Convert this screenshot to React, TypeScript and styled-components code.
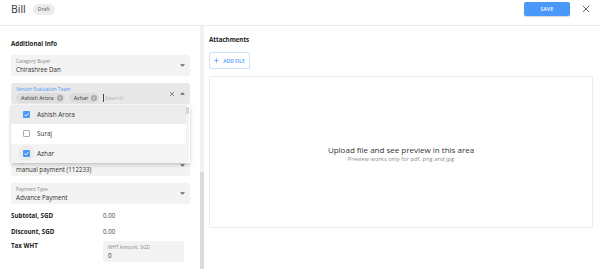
import styled, { createGlobalStyle } from 'styled-components';

const GlobalStyle = createGlobalStyle`
  html, body {
    margin: 0;
    padding: 0;
    background: #fff;
  }
  body {
    font-family: "Open Sans", "Noto Sans", sans-serif;
    color: #2b2b2b;
    width: 600px;
    height: 269px;
    overflow: hidden;
  }
`;

const Page = styled.div`
  width: 600px;
  height: 269px;
  display: flex;
  flex-direction: column;
`;

const Header = styled.header`
  flex-shrink: 0;
  height: 26px;
  box-sizing: border-box;
  border-bottom: 1px solid #ebebeb;
  padding: 2px 7px 0 11px;
  display: flex;
  align-items: flex-start;
  gap: 7px;
`;

const Title = styled.div`
  font-size: 10.5px;
  line-height: 14px;
  color: #333;
`;

const Chip = styled.span`
  margin-top: 2px;
  height: 11px;
  padding: 0 5px;
  border-radius: 6px;
  background: #ececec;
  font-size: 5px;
  line-height: 11px;
  color: #555;
`;

const Spacer = styled.div`
  flex: 1;
`;

const SaveButton = styled.button`
  width: 46px;
  height: 14px;
  border: none;
  border-radius: 2px;
  background: #4a98f7;
  color: #fff;
  font-family: inherit;
  font-size: 5px;
  font-weight: 600;
  letter-spacing: 0.2px;
  padding: 0;
  box-shadow: 0 1px 1px rgba(0, 0, 0, 0.15);
`;

const CloseButton = styled.button`
  width: 14px;
  height: 14px;
  margin-left: 2px;
  border: none;
  background: none;
  padding: 0;
  display: flex;
  align-items: center;
  justify-content: center;
`;

const Body = styled.div`
  flex: 1;
  display: flex;
  min-height: 0;
  overflow: hidden;
`;

const LeftPanel = styled.div`
  width: 200px;
  box-sizing: border-box;
  padding: 13px 10px 0 11px;
  position: relative;
`;

const ScrollTrack = styled.div`
  width: 4px;
  background: #f2f2f2;
  display: flex;
  flex-direction: column;
`;

const ScrollThumb = styled.div`
  margin-top: auto;
  height: 97px;
  background: #dadada;
`;

const SectionTitle = styled.div`
  font-size: 6.2px;
  line-height: 10px;
  font-weight: 700;
  color: #222;
`;

const Fields = styled.div`
  margin-top: 6px;
  display: flex;
  flex-direction: column;
  gap: 7px;
`;

const Field = styled.div<{ $active?: boolean; $tall?: boolean; $width?: number }>`
  position: relative;
  box-sizing: border-box;
  height: ${(p) => (p.$tall ? 37 : 21)}px;
  width: ${(p) => (p.$width ? `${p.$width}px` : 'auto')};
  padding: 3px 18px 0 5px;
  border-radius: 3px;
  background: ${(p) => (p.$active ? '#e8e8e8' : '#f3f3f3')};
  display: flex;
  flex-direction: column;
`;

const FieldLabel = styled.div<{ $active?: boolean }>`
  font-size: 4.8px;
  line-height: 7px;
  color: ${(p) => (p.$active ? '#4a98f7' : '#8a8a8a')};
`;

const FieldValue = styled.div`
  font-size: 6.2px;
  line-height: 9px;
  color: #2f2f2f;
  white-space: nowrap;
`;

const FieldIcons = styled.div`
  position: absolute;
  right: 5px;
  top: 0;
  bottom: 0;
  display: flex;
  align-items: center;
  gap: 5px;
`;

const ChipRow = styled.div`
  display: flex;
  align-items: center;
  gap: 4px;
`;

const TagChip = styled.span`
  height: 10px;
  padding: 0 2px 0 5px;
  border-radius: 5px;
  background: #dcdcdc;
  display: inline-flex;
  align-items: center;
  gap: 3px;
  font-size: 5.5px;
  color: #333;
`;

const SearchInput = styled.span`
  display: inline-flex;
  align-items: center;
  font-size: 5.8px;
  color: #b3b3b3;
  border-left: 1px solid #444;
  padding-left: 1px;
  height: 8px;
`;

const Menu = styled.div`
  position: absolute;
  left: 11px;
  top: 79px;
  width: 179px;
  height: 58px;
  background: #fff;
  box-shadow: 0 2px 4px rgba(0, 0, 0, 0.18), 0 0 1px rgba(0, 0, 0, 0.12);
  display: flex;
  z-index: 2;
`;

const MenuList = styled.div`
  flex: 1;
  display: flex;
  flex-direction: column;
`;

const MenuItem = styled.div<{ $bg: string }>`
  height: 19.3px;
  display: flex;
  align-items: center;
  padding-left: 11px;
  gap: 7px;
  background: ${(p) => p.$bg};
  font-size: 6.4px;
  color: #333;
`;

const CheckWrap = styled.span<{ $ripple?: boolean }>`
  width: 16px;
  height: 16px;
  margin-left: -4px;
  margin-right: -4px;
  border-radius: 50%;
  background: ${(p) => (p.$ripple ? '#ececec' : 'transparent')};
  display: flex;
  align-items: center;
  justify-content: center;
`;

const MenuScroll = styled.div`
  width: 3px;
  margin: 2px 1px 1px 0;
  background: #f4f4f4;
  display: flex;
  flex-direction: column;
`;

const MenuThumb = styled.div`
  height: 7px;
  background: #d6d6d6;
`;

const Totals = styled.div`
  margin-top: 3px;
  display: grid;
  grid-template-columns: 92px 1fr;
  grid-auto-rows: 16px;
  align-items: center;
`;

const TotalLabel = styled.div`
  font-size: 6.2px;
  font-weight: 700;
  color: #222;
`;

const TotalValue = styled.div`
  font-size: 6.2px;
  color: #444;
`;

const TaxRow = styled.div`
  display: grid;
  grid-template-columns: 92px 1fr;
  align-items: start;
  margin-top: 2px;
`;

const TaxLabel = styled(TotalLabel)`
  line-height: 10px;
`;

const RightPanel = styled.div`
  flex: 1;
  padding: 9px 7px 0 5px;
  display: flex;
  flex-direction: column;
`;

const AddFileButton = styled.button`
  margin-top: 7px;
  align-self: flex-start;
  width: 41px;
  height: 17px;
  box-sizing: border-box;
  border: 1px solid #cfe1fb;
  border-radius: 2px;
  background: #fff;
  color: #4a98f7;
  font-family: inherit;
  font-size: 5px;
  font-weight: 600;
  display: flex;
  align-items: center;
  justify-content: center;
  gap: 4px;
  padding: 0;
`;

const PreviewBox = styled.div`
  margin-top: 7px;
  height: 152px;
  box-sizing: border-box;
  border: 1px solid #ececec;
  border-radius: 1px;
  display: flex;
  flex-direction: column;
  align-items: center;
  justify-content: center;
  padding-top: 3px;
`;

const PreviewTitle = styled.div`
  font-size: 8px;
  line-height: 11px;
  color: #333;
`;

const PreviewSub = styled.div`
  font-size: 5.8px;
  line-height: 9px;
  color: #8c8c8c;
`;

const Caret = ({ up }: { up?: boolean }) => (
  <svg width="5" height="3" viewBox="0 0 10 5">
    <path d={up ? 'M0 5 L5 0 L10 5 Z' : 'M0 0 L5 5 L10 0 Z'} fill="#666" />
  </svg>
);

const ClearX = () => (
  <svg width="6" height="6" viewBox="0 0 10 10">
    <path d="M1.5 1.5 L8.5 8.5 M8.5 1.5 L1.5 8.5" stroke="#666" strokeWidth="1.3" />
  </svg>
);

const ChipClose = () => (
  <svg width="6" height="6" viewBox="0 0 12 12">
    <circle cx="6" cy="6" r="6" fill="#a9a9a9" />
    <path d="M3.8 3.8 L8.2 8.2 M8.2 3.8 L3.8 8.2" stroke="#dcdcdc" strokeWidth="1.4" />
  </svg>
);

const Checkbox = ({ checked }: { checked: boolean }) =>
  checked ? (
    <svg width="7" height="7" viewBox="0 0 14 14">
      <rect x="0" y="0" width="14" height="14" rx="2" fill="#4a98f7" />
      <path d="M3 7.2 L5.8 10 L11 4.3" stroke="#fff" strokeWidth="1.8" fill="none" />
    </svg>
  ) : (
    <svg width="7" height="7" viewBox="0 0 14 14">
      <rect x="0.8" y="0.8" width="12.4" height="12.4" rx="2" fill="#fff" stroke="#777" strokeWidth="1.4" />
    </svg>
  );

const menuItems = [
  { name: 'Ashish Arora', checked: true, bg: '#ececec' },
  { name: 'Suraj', checked: false, bg: '#ffffff' },
  { name: 'Azhar', checked: true, bg: '#f4f4f4', ripple: true },
];

const App = () => {
  return (
    <Page>
      <GlobalStyle />
      <Header>
        <Title>Bill</Title>
        <Chip>Draft</Chip>
        <Spacer />
        <SaveButton>SAVE</SaveButton>
        <CloseButton>
          <svg width="8" height="8" viewBox="0 0 10 10">
            <path d="M1 1 L9 9 M9 1 L1 9" stroke="#555" strokeWidth="1.1" />
          </svg>
        </CloseButton>
      </Header>
      <Body>
        <LeftPanel>
          <SectionTitle>Additional Info</SectionTitle>
          <Fields>
            <Field>
              <FieldLabel>Category Buyer</FieldLabel>
              <FieldValue>Chirashree Dan</FieldValue>
              <FieldIcons>
                <Caret />
              </FieldIcons>
            </Field>
            <Field $active>
              <FieldLabel $active>Vendor Evaluation Team</FieldLabel>
              <ChipRow>
                <TagChip>
                  Ashish Arora <ChipClose />
                </TagChip>
                <TagChip>
                  Azhar <ChipClose />
                </TagChip>
                <SearchInput>Search</SearchInput>
              </ChipRow>
              <FieldIcons>
                <ClearX />
                <Caret up />
              </FieldIcons>
            </Field>
            <Field $tall>
              <FieldLabel>Vendor</FieldLabel>
              <FieldValue>—</FieldValue>
            </Field>
            <Field>
              <FieldLabel>Payment Method</FieldLabel>
              <FieldValue>manual payment (112233)</FieldValue>
              <FieldIcons>
                <Caret />
              </FieldIcons>
            </Field>
            <Field>
              <FieldLabel>Payment Type</FieldLabel>
              <FieldValue>Advance Payment</FieldValue>
              <FieldIcons>
                <Caret />
              </FieldIcons>
            </Field>
          </Fields>
          <Totals>
            <TotalLabel>Subtotal, SGD</TotalLabel>
            <TotalValue>0.00</TotalValue>
            <TotalLabel>Discount, SGD</TotalLabel>
            <TotalValue>0.00</TotalValue>
          </Totals>
          <TaxRow>
            <TaxLabel>Tax WHT</TaxLabel>
            <Field $width={81}>
              <FieldLabel>WHT Amount, SGD</FieldLabel>
              <FieldValue>0</FieldValue>
            </Field>
          </TaxRow>
          <Menu>
            <MenuList>
              {menuItems.map((m) => (
                <MenuItem key={m.name} $bg={m.bg}>
                  <CheckWrap $ripple={m.ripple}>
                    <Checkbox checked={m.checked} />
                  </CheckWrap>
                  {m.name}
                </MenuItem>
              ))}
            </MenuList>
            <MenuScroll>
              <MenuThumb />
            </MenuScroll>
          </Menu>
        </LeftPanel>
        <ScrollTrack>
          <ScrollThumb />
        </ScrollTrack>
        <RightPanel>
          <SectionTitle>Attachments</SectionTitle>
          <AddFileButton>
            <svg width="5" height="5" viewBox="0 0 10 10">
              <path d="M5 0.5 V9.5 M0.5 5 H9.5" stroke="#4a98f7" strokeWidth="1.4" />
            </svg>
            ADD FILE
          </AddFileButton>
          <PreviewBox>
            <PreviewTitle>Upload file and see preview in this area</PreviewTitle>
            <PreviewSub>Preview works only for pdf, png and jpg</PreviewSub>
          </PreviewBox>
        </RightPanel>
      </Body>
    </Page>
  );
};

export default App;
